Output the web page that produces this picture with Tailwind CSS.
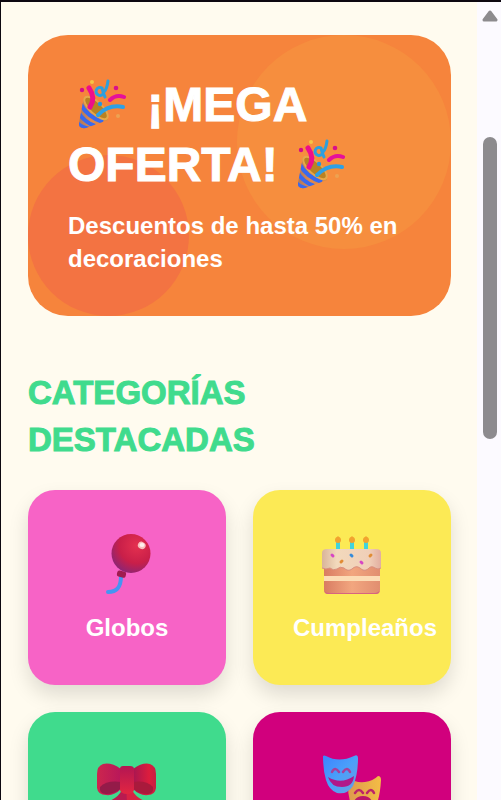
<!DOCTYPE html>
<html lang="es">
<head>
  <meta charset="UTF-8">
  <meta name="viewport" content="width=device-width, initial-scale=1.0">
  <script src="https://cdn.jsdelivr.net/npm/@tailwindcss/browser@4"></script>
  <title>Mega Oferta</title>
</head>
<body class="flex h-screen overflow-hidden border-t-2 border-l border-[#0d0810] bg-[#fffbef] font-['Liberation_Sans',sans-serif] font-bold">

  <!-- Shared drawings -->
  <svg class="absolute size-0" aria-hidden="true">
    <defs>
      <linearGradient id="cone" x1="0" y1="0" x2="1" y2="0">
        <stop offset="0" stop-color="#a87962"/>
        <stop offset=".4" stop-color="#e0884e"/>
        <stop offset="1" stop-color="#d58a43"/>
      </linearGradient>
      <clipPath id="cone-clip"><path d="M6 18 L1 44 Q0 50 8 49 L30 41 Q24 24 6 18Z"/></clipPath>
      <symbol id="party" viewBox="0 0 48 50">
        <path d="M6 18 L1 44 Q0 50 8 49 L30 41 Q24 24 6 18Z" fill="url(#cone)"/>
        <g clip-path="url(#cone-clip)" fill="none" stroke="#3969ee" stroke-width="4">
          <path d="M2 24 Q9 38 25 43"/>
          <path d="M0 33 Q6 43 17 47"/>
          <path d="M-2 43 Q4 49 12 50"/>
        </g>
        <ellipse cx="18" cy="29" rx="15" ry="6" transform="rotate(43 18 29)" fill="#b98223" stroke="#e5a84b" stroke-width="2"/>
        <path d="M12 28 Q18 19 11 9" fill="none" stroke="#ee0d8b" stroke-width="5" stroke-linecap="round"/>
        <path d="M20 36 Q31 25 45 28" fill="none" stroke="#2da0e6" stroke-width="4" stroke-linecap="round"/>
        <path d="M32 21 Q38 15 46 18" fill="none" stroke="#e6109a" stroke-width="4" stroke-linecap="round"/>
        <path d="M30 2 Q29 10 26 13 A4 4 0 1 1 24 9 Q25 14 27 18" fill="none" stroke="#2d9fdd" stroke-width="3" stroke-linecap="round"/>
        <circle cx="14" cy="3" r="2" fill="#f4c445"/>
        <circle cx="4" cy="11" r="2.2" fill="#d60c88"/>
        <circle cx="38" cy="9" r="2.3" fill="#d9108a"/>
        <circle cx="22" cy="25" r="2.2" fill="#2697df"/>
        <circle cx="40" cy="37" r="2" fill="#eda252"/>
      </symbol>
      <radialGradient id="balloon" cx=".65" cy=".3" r=".75">
        <stop offset="0" stop-color="#e4304f"/>
        <stop offset=".6" stop-color="#c91f49"/>
        <stop offset="1" stop-color="#8d2574"/>
      </radialGradient>
      <linearGradient id="frosting">
        <stop offset="0" stop-color="#d9b49a"/>
        <stop offset=".25" stop-color="#f2d9bc"/>
        <stop offset=".8" stop-color="#f0cfb8"/>
        <stop offset="1" stop-color="#e2aea0"/>
      </linearGradient>
      <linearGradient id="sponge">
        <stop offset="0" stop-color="#d97c62"/>
        <stop offset=".5" stop-color="#f2a67f"/>
        <stop offset="1" stop-color="#e18e70"/>
      </linearGradient>
      <linearGradient id="bow-left">
        <stop offset="0" stop-color="#cc264e"/>
        <stop offset="1" stop-color="#b8175a"/>
      </linearGradient>
      <linearGradient id="bow-right">
        <stop offset="0" stop-color="#a81651"/>
        <stop offset=".7" stop-color="#dc1d3d"/>
        <stop offset="1" stop-color="#c62043"/>
      </linearGradient>
      <linearGradient id="bow-knot" x1="0" y1="0" x2="0" y2="1">
        <stop offset="0" stop-color="#b31653"/>
        <stop offset="1" stop-color="#e22641"/>
      </linearGradient>
      <linearGradient id="mask-blue" x1="0" y1="0" x2="1" y2="1">
        <stop offset="0" stop-color="#3c83ff"/>
        <stop offset=".5" stop-color="#4ba0fa"/>
        <stop offset="1" stop-color="#6e9de0"/>
      </linearGradient>
      <linearGradient id="mask-gold">
        <stop offset="0" stop-color="#dd9a4e"/>
        <stop offset="1" stop-color="#f4bd45"/>
      </linearGradient>
    </defs>
  </svg>

  <main class="min-w-0 flex-1 pr-[26px] pl-[27px] pt-[33px]">
    <!-- Oferta -->
    <section class="relative overflow-hidden rounded-[40px] bg-[#f6843c] p-10 text-white">
      <div class="absolute top-0 right-0 size-[214px] rounded-full bg-[#f68e3e]"></div>
      <div class="absolute bottom-0 left-0 size-[161px] rounded-full bg-[#f37342]"></div>
      <div class="relative">
        <h1 class="text-[48px] leading-[60px] [-webkit-text-stroke:1px_white]"><svg class="mr-2 ml-[10px] inline-block h-[50px] w-12 align-[-8px]" aria-hidden="true"><use href="#party"/></svg> ¡MEGA OFERTA! <svg class="ml-[6px] inline-block h-[50px] w-12 align-[-8px]" aria-hidden="true"><use href="#party"/></svg></h1>
        <p class="mt-[14px] mb-px text-[24px] leading-[33px]">Descuentos de hasta 50% en decoraciones</p>
      </div>
    </section>

    <!-- Categorías -->
    <section class="mt-[53px]">
      <h2 class="text-[33px] leading-[47px] text-[#40db8d] [-webkit-text-stroke:1px_#40db8d]">CATEGORÍAS DESTACADAS</h2>
      <div class="mt-[27px] grid grid-cols-2 gap-[27px] text-[24px] leading-[33px] text-white">
        <a href="#globos" class="flex h-[195px] min-w-0 flex-col rounded-[27px] bg-[#f763c6] p-10 shadow-[0_10px_20px_rgba(0,0,0,0.13)]">
          <svg class="mx-auto mt-1 size-[60px] shrink-0 overflow-visible" viewBox="0 0 60 60" aria-hidden="true">
            <path d="M24 42 C24 52 21 58 11 58" fill="none" stroke="#4695f2" stroke-width="4" stroke-linecap="round"/>
            <rect x="20" y="37" width="9" height="6" rx="2" transform="rotate(14 24 40)" fill="#a01b50"/>
            <circle cx="34" cy="19.500" r="19.500" fill="url(#balloon)"/>
            <ellipse cx="45" cy="11.500" rx="4" ry="3.500" transform="rotate(30 45 11)" fill="#f9bdbd"/>
            <ellipse cx="45" cy="11" rx="2.500" ry="2" fill="#fff1ed"/>
          </svg>
          <span class="mt-[17px] text-center">Globos</span>
        </a>
        <a href="#cumpleanos" class="flex h-[195px] min-w-0 flex-col rounded-[27px] bg-[#fcea55] p-10 shadow-[0_10px_20px_rgba(0,0,0,0.13)]">
          <svg class="mx-auto mt-1 size-[60px] shrink-0" viewBox="0 0 60 60" aria-hidden="true">
            <g fill="#42d3dc">
              <rect x="14" y="8" width="4" height="8"/>
              <rect x="28" y="8" width="4" height="8"/>
              <rect x="42" y="8" width="4" height="8"/>
            </g>
            <g fill="#f2a32f">
              <circle cx="16" cy="6" r="3"/>
              <circle cx="30" cy="6" r="3"/>
              <circle cx="44" cy="6" r="3"/>
              <path d="M14 4 L16 2 L18 4Z M28 4 L30 2 L32 4Z M42 4 L44 2 L46 4Z"/>
            </g>
            <path d="M2 32 H58 V56 Q58 60 54 60 H6 Q2 60 2 56Z" fill="url(#sponge)"/>
            <path d="M2.500 57 Q3 60 6 60 H54 Q57 60 57.500 57 Q55 59 53 59 H7 Q4 59 2.500 57Z" fill="#d76480"/>
            <rect x="2" y="42" width="56" height="5" fill="#fcdcb5"/>
            <path d="M0 19 Q0 15 5 15 H54 Q59 15 59 19 V34 Q56 36 53 34 Q49 31 46 35 Q42 38 38 34 Q34 31 30 35 Q26 38 22 34 Q18 32 15 35 Q11 37 8 34 Q3 36 0 34Z" fill="url(#frosting)"/>
            <path d="M0 34 Q4 36 8 34 Q11 37 15 35 Q18 32 22 34 Q26 38 30 35 Q34 31 38 34 Q42 38 46 35 Q49 31 53 34 Q56 36 59 34" fill="none" stroke="#d98f7e"/>
            <g stroke-width="3" stroke-linecap="round">
              <path d="M10 21 l1 1" stroke="#d746c4"/>
              <path d="M29 21 l1 1" stroke="#368bd9"/>
              <path d="M49 21 l-1 1" stroke="#e18d36"/>
              <path d="M20 27 l-1 1" stroke="#e18d36"/>
              <path d="M39 28 l1 1" stroke="#d746c4"/>
            </g>
          </svg>
          <span class="mt-[17px] text-center">Cumpleaños</span>
        </a>
        <a href="#monos" aria-label="Moños" class="flex h-[195px] min-w-0 flex-col rounded-[27px] bg-[#40db8d] p-10 shadow-[0_10px_20px_rgba(0,0,0,0.13)]">
          <svg class="mx-auto mt-1 size-[60px] shrink-0" viewBox="0 0 60 60" aria-hidden="true">
            <path d="M25 34 Q21 42 10 46 L19 56 L25 60 Q32 45 30 34Z" fill="#b81b50"/>
            <path d="M35 34 Q39 42 50 46 L41 56 L35 60 Q28 45 30 34Z" fill="#d82343"/>
            <path d="M24 13 Q14 6 6 8 Q0 10 0 18 V32 Q1 39 9 39 Q17 40 24 33Z" fill="url(#bow-left)"/>
            <path d="M36 13 Q46 6 53 8 Q59 10 59 18 V32 Q58 39 51 39 Q43 40 36 33Z" fill="url(#bow-right)"/>
            <path d="M24 26 Q10 24 3 31 Q2 38 9 38 Q18 38 24 32Z" fill="#941b49"/>
            <path d="M36 26 Q49 24 56 31 Q57 38 51 38 Q42 38 36 32Z" fill="#a91a3c"/>
            <path d="M23 13 Q23 10 26 10 H33 Q37 10 37 13 V34 Q36 38 30 38 Q24 38 23 34Z" fill="url(#bow-knot)"/>
          </svg>
        </a>
        <a href="#disfraces" aria-label="Disfraces" class="flex h-[195px] min-w-0 flex-col rounded-[27px] bg-[#d1007d] p-10 shadow-[0_10px_20px_rgba(0,0,0,0.13)]">
          <svg class="mx-auto mt-1 size-[60px] shrink-0 overflow-visible" viewBox="0 0 60 60" aria-hidden="true">
            <path d="M27 22 Q33 27 43 26 Q51 25 56 20 Q59 20 59 24 Q58 42 53 52 Q45 62 34 56 Q25 47 26 23Z" fill="url(#mask-gold)"/>
            <path d="M33 37 Q37 31 41 37 M45 37 Q49 31 52 37" fill="none" stroke="#bd2468" stroke-width="2.500" stroke-linecap="round"/>
            <path d="M31 48 Q33 40 41 40 Q49 40 51 48 Q42 43 31 48Z" fill="#bd1768"/>
            <path d="M1 0 Q2 -1 4 0 Q17 7 32 0 Q36 -2 36 2 Q36 19 31 30 Q25 39 15 37 Q7 34 4 24 Q1 14 1 0Z" fill="url(#mask-blue)"/>
            <path d="M10 16 Q13 10 17 16 M21 16 Q25 10 28 16" fill="none" stroke="#a6409c" stroke-width="2.500" stroke-linecap="round"/>
            <path d="M6 21 Q19 29 32 20 Q31 31 20 31 Q9 31 6 21Z" fill="#b11889"/>
          </svg>
        </a>
      </div>
    </section>
  </main>

  <!-- Barra de desplazamiento -->
  <aside class="flex w-6 shrink-0 flex-col items-center bg-[#fcfaff] pt-[7px] pl-[2px]" aria-hidden="true">
    <svg class="h-[13px] w-4" viewBox="0 0 16 13">
      <path d="M8 3 L14 11 H2Z" fill="#8d8b8e" stroke="#8d8b8e" stroke-width="3" stroke-linejoin="round"/>
    </svg>
    <div class="mt-[115px] h-[302px] w-[14px] rounded-full bg-[#8d8b8e]"></div>
  </aside>
</body>
</html>
